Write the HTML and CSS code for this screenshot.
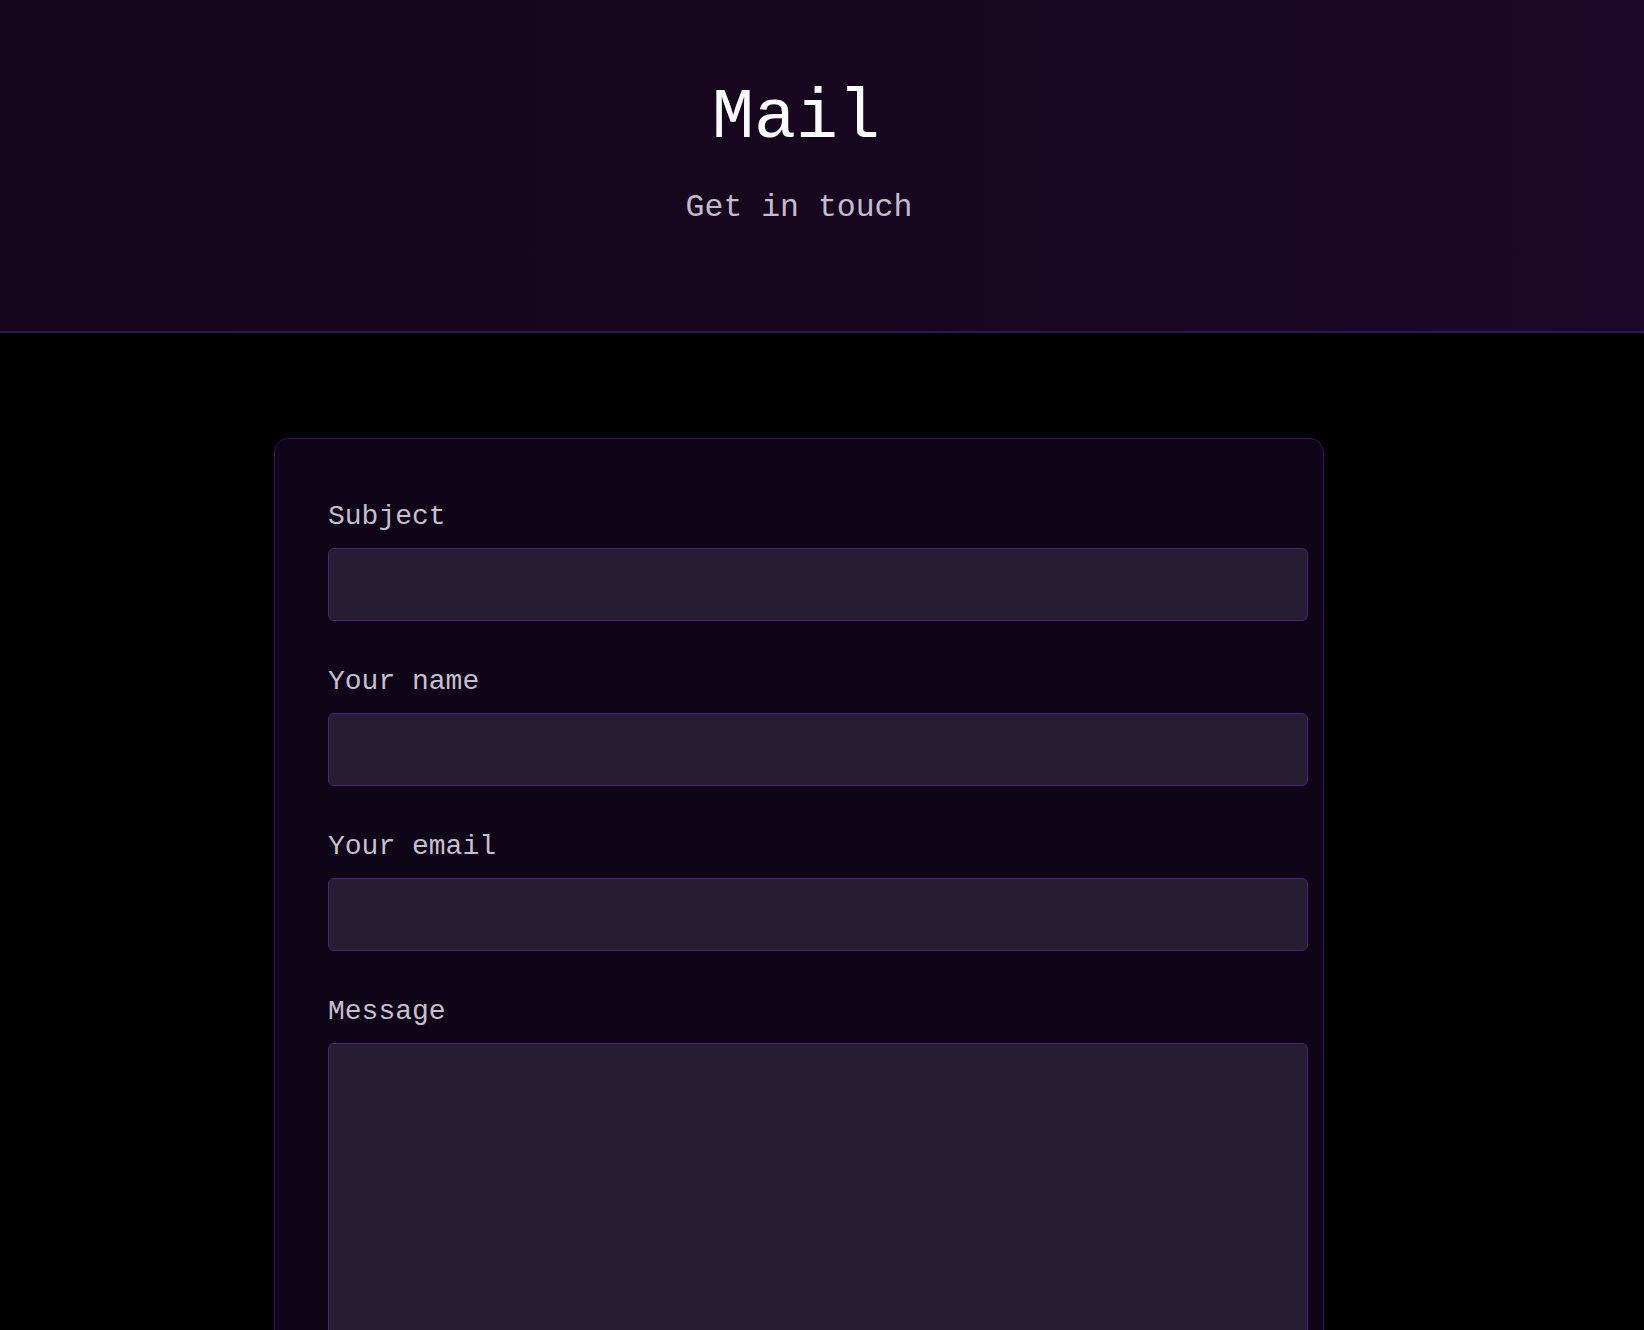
FILE: index.html
```html
<!DOCTYPE html>
<html lang="en">
<head>
<meta charset="utf-8">
<title>Mail</title>
<link rel="stylesheet" href="styles.css">
</head>
<body>
<header class="hero">
  <div class="hero-inner">
    <h1 class="hero-title">Mail</h1>
    <p class="hero-sub">Get in touch</p>
  </div>
</header>
<main class="main">
  <form class="card">
    <div class="field">
      <label class="label" for="subject">Subject</label>
      <input class="input" id="subject" type="text">
    </div>
    <div class="field">
      <label class="label" for="name">Your name</label>
      <input class="input" id="name" type="text">
    </div>
    <div class="field">
      <label class="label" for="email">Your email</label>
      <input class="input" id="email" type="email">
    </div>
    <div class="field">
      <label class="label" for="message">Message</label>
      <textarea class="input textarea" id="message"></textarea>
    </div>
  </form>
</main>
</body>
</html>
```

FILE: styles.css
```css
* { box-sizing: border-box; }
html, body { margin: 0; padding: 0; }
body {
  background: #000;
  font-family: "Liberation Mono", "DejaVu Sans Mono", monospace;
  color: #c9c2cf;
}
.hero {
  background: linear-gradient(90deg, #13051b 0%, #16071f 50%, #1c0929 100%);
  border-bottom: 2px solid #331458;
  height: 333px;
}
.hero-inner {
  padding: 76px 46px 0 0;
  display: flex;
  flex-direction: column;
  align-items: center;
}
.hero-title {
  margin: 0 6px 0 0;
  font-size: 70px;
  line-height: 86px;
  font-weight: 400;
  color: #fbfaff;
}
.hero-sub {
  margin: 26px 0 0;
  font-size: 31.5px;
  line-height: 40px;
  color: #c4bccb;
}
.main {
  display: flex;
  justify-content: center;
  padding: 105px 46px 0 0;
}
.card {
  width: 1050px;
  background: #0e0518;
  border: 1px solid #34145a;
  border-radius: 14px;
  padding: 61px 15px 60px 53px;
  display: flex;
  flex-direction: column;
  gap: 44px;
}
.field {
  display: flex;
  flex-direction: column;
}
.label {
  font-size: 28px;
  line-height: 34px;
  margin-bottom: 14px;
  color: #c6bfcc;
}
.input {
  display: block;
  width: 100%;
  height: 73px;
  background: #261d32;
  border: 1px solid #4a2474;
  border-radius: 6px;
  font-family: inherit;
  font-size: 24px;
  color: #e6e0ea;
  padding: 0 18px;
  outline: none;
}
.textarea {
  height: 330px;
  resize: none;
  padding: 16px 18px;
}
```
